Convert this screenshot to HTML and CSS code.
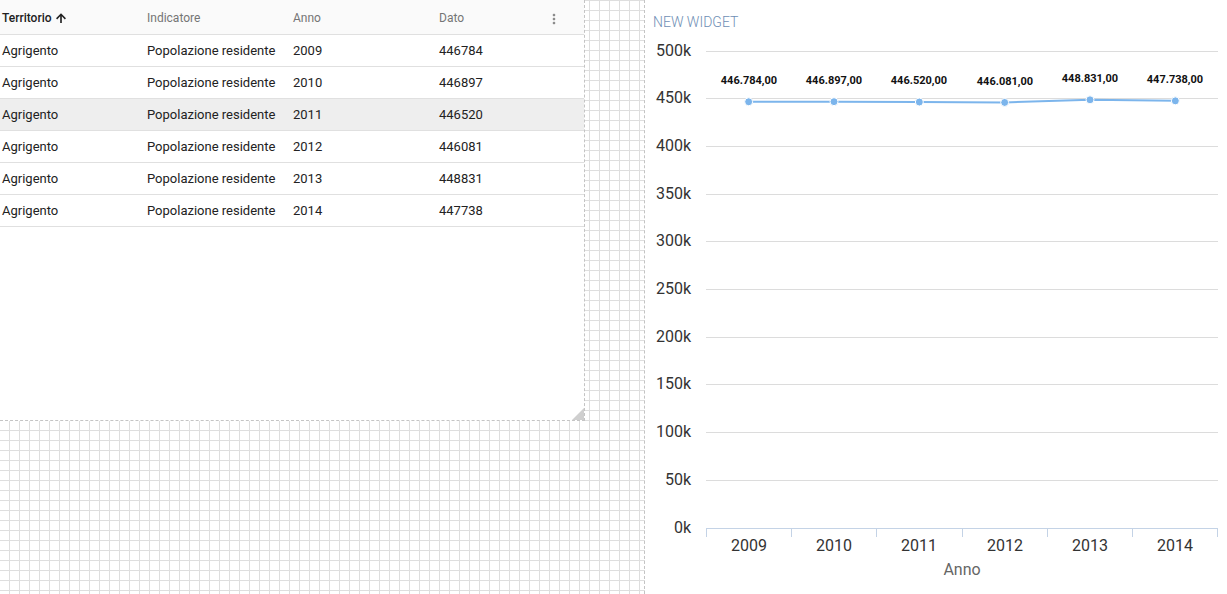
FILE: index.html
```html
<!DOCTYPE html>
<html lang="it">
<head>
<meta charset="utf-8">
<title>Dashboard</title>
<link rel="stylesheet" href="styles.css">
</head>
<body>
<div class="board">
  <div class="canvas">
    <div class="table-widget">
      <div class="row head">
        <div class="cell sorted">Territorio <svg class="arrow" viewBox="0 0 24 24" width="14" height="14"><path d="M3.5 12.5l1.9 1.9L10.6 9.2V20.5h2.8V9.2l5.2 5.2 1.9-1.9L12 4z" fill="#212121"/></svg></div>
        <div class="cell">Indicatore</div>
        <div class="cell">Anno</div>
        <div class="cell last">Dato <svg class="kebab" viewBox="0 0 24 24" width="16" height="16"><path d="M12 8c1.1 0 2-.9 2-2s-.9-2-2-2-2 .9-2 2 .9 2 2 2zm0 2c-1.1 0-2 .9-2 2s.9 2 2 2 2-.9 2-2-.9-2-2-2zm0 6c-1.1 0-2 .9-2 2s.9 2 2 2 2-.9 2-2-.9-2-2-2z" fill="#8a8a8a"/></svg></div>
      </div>
      <div class="row"><div class="cell">Agrigento</div><div class="cell">Popolazione residente</div><div class="cell">2009</div><div class="cell">446784</div></div>
      <div class="row"><div class="cell">Agrigento</div><div class="cell">Popolazione residente</div><div class="cell">2010</div><div class="cell">446897</div></div>
      <div class="row hover"><div class="cell">Agrigento</div><div class="cell">Popolazione residente</div><div class="cell">2011</div><div class="cell">446520</div></div>
      <div class="row"><div class="cell">Agrigento</div><div class="cell">Popolazione residente</div><div class="cell">2012</div><div class="cell">446081</div></div>
      <div class="row"><div class="cell">Agrigento</div><div class="cell">Popolazione residente</div><div class="cell">2013</div><div class="cell">448831</div></div>
      <div class="row"><div class="cell">Agrigento</div><div class="cell">Popolazione residente</div><div class="cell">2014</div><div class="cell">447738</div></div>
    </div>
  </div>
  <div class="chart-widget">
    <div class="title">NEW WIDGET</div>
    <svg class="chart" width="582" height="564" viewBox="0 0 582 564">
      <g class="grid" stroke="#dcdcdc" stroke-width="1">
        <line x1="61" x2="573" y1="21.5" y2="21.5"/>
        <line x1="61" x2="573" y1="68.5" y2="68.5"/>
        <line x1="61" x2="573" y1="116.5" y2="116.5"/>
        <line x1="61" x2="573" y1="164.5" y2="164.5"/>
        <line x1="61" x2="573" y1="211.5" y2="211.5"/>
        <line x1="61" x2="573" y1="259.5" y2="259.5"/>
        <line x1="61" x2="573" y1="307.5" y2="307.5"/>
        <line x1="61" x2="573" y1="354.5" y2="354.5"/>
        <line x1="61" x2="573" y1="402.5" y2="402.5"/>
        <line x1="61" x2="573" y1="450.5" y2="450.5"/>
      </g>
      <g class="axis" stroke="#c4d3e6" stroke-width="1">
        <line x1="61" x2="573" y1="498.5" y2="498.5"/>
        <line x1="61.5" x2="61.5" y1="498" y2="507"/>
        <line x1="146.5" x2="146.5" y1="498" y2="507"/>
        <line x1="231.5" x2="231.5" y1="498" y2="507"/>
        <line x1="317.5" x2="317.5" y1="498" y2="507"/>
        <line x1="402.5" x2="402.5" y1="498" y2="507"/>
        <line x1="487.5" x2="487.5" y1="498" y2="507"/>
        <line x1="572.5" x2="572.5" y1="498" y2="507"/>
      </g>
      <g class="ylabels" text-anchor="end">
        <text x="46" y="26">500k</text>
        <text x="46" y="73">450k</text>
        <text x="46" y="121">400k</text>
        <text x="46" y="169">350k</text>
        <text x="46" y="216">300k</text>
        <text x="46" y="264">250k</text>
        <text x="46" y="312">200k</text>
        <text x="46" y="359">150k</text>
        <text x="46" y="407">100k</text>
        <text x="46" y="455">50k</text>
        <text x="46" y="503">0k</text>
      </g>
      <g class="xlabels" text-anchor="middle">
        <text x="104" y="521">2009</text>
        <text x="189" y="521">2010</text>
        <text x="274" y="521">2011</text>
        <text x="360" y="521">2012</text>
        <text x="445" y="521">2013</text>
        <text x="530" y="521">2014</text>
      </g>
      <text class="xtitle" x="317" y="545" text-anchor="middle">Anno</text>
      <polyline points="103.67,71.77 189,71.66 274.33,72.02 359.67,72.44 445,69.81 530.33,70.86" fill="none" stroke="#7cb5ec" stroke-width="2"/>
      <g fill="#7cb5ec" stroke="#ffffff" stroke-width="1">
        <circle cx="103.67" cy="71.77" r="4"/>
        <circle cx="189" cy="71.66" r="4"/>
        <circle cx="274.33" cy="72.02" r="4"/>
        <circle cx="359.67" cy="72.44" r="4"/>
        <circle cx="445" cy="69.81" r="4"/>
        <circle cx="530.33" cy="70.86" r="4"/>
      </g>
      <g class="dlabels" text-anchor="middle">
        <text x="104" y="54">446.784,00</text>
        <text x="189" y="54">446.897,00</text>
        <text x="274" y="54">446.520,00</text>
        <text x="360" y="55">446.081,00</text>
        <text x="445" y="52">448.831,00</text>
        <text x="530" y="53">447.738,00</text>
      </g>
    </svg>
  </div>
</div>
</body>
</html>
```
FILE: styles.css
```css
html, body {
  margin: 0;
  padding: 0;
  height: 100%;
}
body {
  font-family: Roboto, "Liberation Sans", sans-serif;
  background: #fff;
  overflow: hidden;
}
.board {
  display: flex;
  height: 594px;
}
.canvas {
  flex: none;
  width: 644px;
  border-right: 1px dashed #c4c4c4;
  background-color: #fff;
  background-image:
    linear-gradient(to right, transparent 9px, #dedede 9px, #dedede 10px, transparent 10px),
    linear-gradient(to bottom, #dedede 1px, transparent 1px);
  background-size: 10px 10px;
}
.table-widget {
  position: relative;
  width: 584px;
  height: 420px;
  background: #fff;
  border-right: 1px dashed #c4c4c4;
  border-bottom: 1px dashed #c4c4c4;
}
.table-widget::after {
  content: "";
  position: absolute;
  right: 0;
  bottom: 0;
  width: 0;
  height: 0;
  border-left: 12px solid transparent;
  border-bottom: 12px solid #cfcfcf;
}
.row {
  display: grid;
  grid-template-columns: 145px 146px 146px 1fr;
  align-items: center;
  height: 31px;
  border-bottom: 1px solid #e0e0e0;
  font-size: 13px;
  color: #222;
}
.row.head {
  font-size: 12px;
  color: #757575;
  background: #fafafa;
  padding-top: 2px;
  box-sizing: border-box;
  height: 35px;
}
.row.hover {
  background: #eeeeee;
}
.cell {
  padding-left: 2px;
  white-space: nowrap;
}
.cell.sorted {
  color: #212121;
  font-weight: 500;
  display: flex;
  align-items: center;
  gap: 2px;
}
.cell.last {
  display: flex;
  align-items: center;
  justify-content: space-between;
  padding-right: 22px;
}
.kebab {
  margin-top: 2px;
}
.chart-widget {
  flex: 1;
  background: #fff;
  padding-left: 8px;
  overflow: hidden;
}
.title {
  padding-top: 14px;
  line-height: 16px;
  font-size: 14px;
  font-weight: 300;
  color: #6f8fb5;
  height: 16px;
}
.chart {
  display: block;
  margin-left: -8px;
  font-family: Roboto, "Liberation Sans", sans-serif;
}
.ylabels text, .xlabels text {
  font-size: 16px;
  fill: #333;
}
.xtitle {
  font-size: 16px;
  fill: #666;
}
.dlabels text {
  font-size: 11px;
  font-weight: bold;
  fill: #111;
}
```
